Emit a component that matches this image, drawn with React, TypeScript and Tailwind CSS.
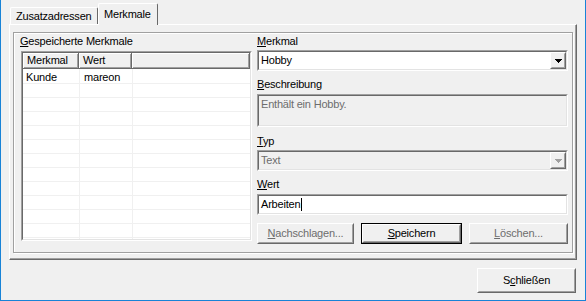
import type { ReactNode } from 'react'

// classic 3D edges
function Sunken({ className = '', innerClassName = '', children }: { className?: string; innerClassName?: string; children?: ReactNode }) {
  return (
    <div className={`border border-t-[#a0a0a0] border-l-[#a0a0a0] border-r-white border-b-white ${className}`}>
      <div className={`h-full border border-t-[#696969] border-l-[#696969] border-r-[#e3e3e3] border-b-[#e3e3e3] ${innerClassName}`}>
        {children}
      </div>
    </div>
  )
}

function Raised({ className = '', children }: { className?: string; children?: ReactNode }) {
  return (
    <div className={`border border-t-white border-l-white border-r-[#696969] border-b-[#696969] ${className}`}>
      <div className="h-full w-full border border-t-[#f0f0f0] border-l-[#f0f0f0] border-r-[#a0a0a0] border-b-[#a0a0a0] flex items-center justify-center">
        {children}
      </div>
    </div>
  )
}

function Arrow({ color }: { color: string }) {
  return (
    <svg width="7" height="4" viewBox="0 0 7 4" fill={color}>
      <rect x="0" y="0" width="7" height="1" />
      <rect x="1" y="1" width="5" height="1" />
      <rect x="2" y="2" width="3" height="1" />
      <rect x="3" y="3" width="1" height="1" />
    </svg>
  )
}

function Combo({ value, disabled }: { value: string; disabled?: boolean }) {
  return (
    <Sunken className="h-[21px] mt-[2px]" innerClassName={`flex ${disabled ? 'bg-[#f0f0f0]' : 'bg-white'}`}>
      <div className={`flex-1 flex items-center pl-[2px] ${disabled ? 'text-[#6d6d6d]' : ''}`}>{value}</div>
      <Raised className="w-[16px] h-full bg-[#f0f0f0]">
        <Arrow color={disabled ? '#a0a0a0' : '#000'} />
      </Raised>
    </Sunken>
  )
}

function Label({ first, rest, className = '' }: { first: string; rest: string; className?: string }) {
  return (
    <div className={`h-[13px] ${className}`}>
      <span className="underline underline-offset-[1px]">{first}</span>
      {rest}
    </div>
  )
}

const rows = [
  { merkmal: 'Kunde', wert: 'mareon' },
  ...Array.from({ length: 12 }, () => ({ merkmal: '', wert: '' })),
]

export default function App() {
  return (
    <div className="w-[586px] h-[301px] bg-[#f0f0f0] border-x border-b border-[#1883d7] flex flex-col text-[11px] leading-[13px] tracking-[-0.2px] text-black font-['Liberation_Sans',Arial,sans-serif]">
      {/* tabs */}
      <div className="h-[24px] flex items-end pl-[9px]">
        <div className="h-[17px] w-[88px] rounded-t-[2px] border border-b-0 border-t-white border-l-white border-r-[#696969] pl-[5px] pt-[2px]">
          Zusatzadressen
        </div>
        <div className="relative z-10 -mb-px h-[22px] w-[60px] rounded-t-[2px] bg-[#f0f0f0] border border-b-0 border-t-white border-l-white border-r-[#696969] pl-[5px] pt-[4px]">
          Merkmale
        </div>
      </div>

      {/* tab page */}
      <div className="ml-[8px] w-[568px] h-[236px] border border-t-white border-l-white border-r-[#696969] border-b-[#696969] shadow-[inset_-1px_-1px_0_#a0a0a0] pl-[3px] pt-[7px]">
        <div className="w-[560px] h-[221px] border border-[#a0a0a0] shadow-[1px_1px_0_#fff,inset_1px_1px_0_#fff] flex">
          {/* stored list */}
          <div className="w-[238px] pl-[6px] pt-[2px] flex flex-col">
            <Label first="G" rest="espeicherte Merkmale" />
            <Sunken className="ml-[1px] mt-[3px] w-[231px] h-[190px]" innerClassName="bg-white overflow-hidden">
              <div className="h-[16px] flex bg-[#f0f0f0]">
                <div className="w-[56px] flex items-center pl-[4px] border-r border-b border-[#696969] shadow-[inset_1px_1px_0_#fff,inset_-1px_-1px_0_#a0a0a0]">Merkmal</div>
                <div className="w-[53px] flex items-center pl-[4px] border-r border-b border-[#696969] shadow-[inset_1px_1px_0_#fff,inset_-1px_-1px_0_#a0a0a0]">Wert</div>
                <div className="flex-1 border-r border-b border-[#696969] shadow-[inset_1px_1px_0_#fff,inset_-1px_-1px_0_#a0a0a0]" />
              </div>
              {rows.map((row, i) => (
                <div key={i} className={`flex border-b border-[#f0f0f0] ${i === 0 ? 'h-[15px]' : 'h-[14px]'}`}>
                  <div className={`w-[57px] border-r border-[#f0f0f0] pl-[3px] ${i === 0 ? 'pt-[2px]' : ''}`}>{row.merkmal}</div>
                  <div className={`w-[53px] border-r border-[#f0f0f0] pl-[4px] ${i === 0 ? 'pt-[2px]' : ''}`}>{row.wert}</div>
                  <div className="flex-1" />
                </div>
              ))}
            </Sunken>
          </div>

          {/* detail fields */}
          <div className="ml-[5px] w-[311px] pt-[2px] flex flex-col">
            <Label first="M" rest="erkmal" />
            <Combo value="Hobby" />

            <Label first="B" rest="eschreibung" className="mt-[7px]" />
            <Sunken className="mt-[3px] h-[33px]" innerClassName="bg-[#f0f0f0] pl-[2px] pt-[2px] text-[#6d6d6d]">
              Enthält ein Hobby.
            </Sunken>

            <Label first="T" rest="yp" className="mt-[8px]" />
            <Combo value="Text" disabled />

            <Label first="W" rest="ert" className="mt-[7px]" />
            <Sunken className="mt-[3px] h-[21px]" innerClassName="bg-white flex items-center pl-[2px]">
              Arbeiten
              <span className="ml-px w-px h-[13px] bg-black" />
            </Sunken>

            <div className="mt-[8px] flex justify-between">
              <Raised className="w-[97px] h-[21px] text-[#6d6d6d]">
                <span><span className="underline underline-offset-[1px]">N</span>achschlagen...</span>
              </Raised>
              <div className="border border-black">
                <Raised className="w-[99px] h-[19px]">
                  <span><span className="underline underline-offset-[1px]">S</span>peichern</span>
                </Raised>
              </div>
              <Raised className="w-[99px] h-[21px] text-[#6d6d6d]">
                <span><span className="underline underline-offset-[1px]">L</span>öschen...</span>
              </Raised>
            </div>
          </div>
        </div>
      </div>

      {/* footer */}
      <div className="flex justify-end pr-[9px] pt-[8px]">
        <Raised className="w-[99px] h-[25px]">
          <span>S<span className="underline underline-offset-[1px]">c</span>hließen</span>
        </Raised>
      </div>
    </div>
  )
}
